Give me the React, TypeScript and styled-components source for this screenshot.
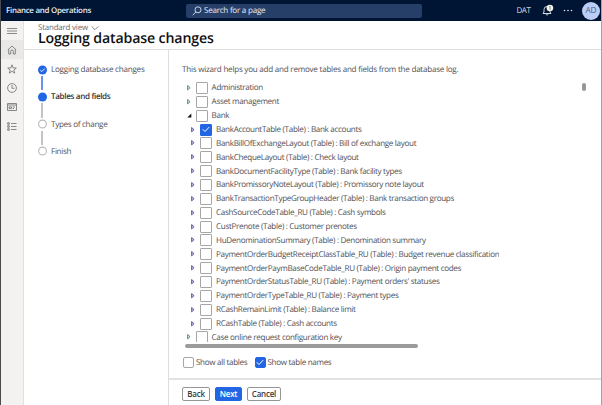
import React from "react";
import styled, { createGlobalStyle, css } from "styled-components";

const Global = createGlobalStyle`
  * { box-sizing: border-box; }
  body { margin: 0; background: #fff; overflow: hidden; }
  svg { display: block; flex: none; }
`;

const Shell = styled.div`
  width: 602px;
  height: 405px;
  display: flex;
  flex-direction: column;
  overflow: hidden;
  background: #fff;
  border-left: 1px solid #4b4a4d;
  border-right: 1px solid #a3a3a3;
  font-family: "Open Sans", "Noto Sans", sans-serif;
  font-size: 8.1px;
  color: #505055;
  white-space: nowrap;
  text-rendering: geometricPrecision;
`;

const TopBar = styled.header`
  height: 21px;
  flex: none;
  display: flex;
  align-items: center;
  background: #001433;
  color: #e8edf5;
  padding: 0 1px 0 5px;
`;

const Brand = styled.div`
  width: 180px;
  font-size: 7.9px;
  font-weight: 600;
  letter-spacing: -0.26px;
`;

const Search = styled.div`
  width: 236px;
  height: 14px;
  border-radius: 2px;
  background: #263f68;
  display: flex;
  align-items: center;
  gap: 2px;
  padding-left: 6px;
  font-size: 8.1px;
  letter-spacing: -0.26px;
`;

const TopActions = styled.div`
  margin-left: auto;
  display: flex;
  align-items: center;
`;

const Company = styled.span`
  font-size: 8px;
  letter-spacing: -0.45px;
  width: 25px;
  color: #d5dbe6;
`;

const Overflow = styled.span`
  margin: 0 9.5px 0 9px;
`;

const Avatar = styled.div`
  width: 18px;
  height: 18px;
  border-radius: 50%;
  background: #b9cdf6;
  color: #51637f;
  font-size: 8.4px;
  letter-spacing: -0.2px;
  display: flex;
  align-items: center;
  justify-content: center;
`;

const Body = styled.div`
  flex: 1;
  display: flex;
  min-height: 0;
`;

const Rail = styled.nav`
  width: 23px;
  flex: none;
  background: #f3f2f1;
  border-right: 1px solid #e1e1e1;
`;

const RailItem = styled.div<{ $active?: boolean }>`
  height: 19.2px;
  display: flex;
  align-items: center;
  justify-content: center;
  background: ${(p) => (p.$active ? "#e9e8e6" : "transparent")};
`;

const Main = styled.div`
  flex: 1;
  min-width: 0;
  display: flex;
  flex-direction: column;
`;

const PageHead = styled.div`
  height: 29px;
  flex: none;
  border-bottom: 1px solid #dedede;
  padding: 2px 0 0 14px;
`;

const View = styled.div`
  height: 10px;
  display: flex;
  align-items: center;
  gap: 3px;
  font-size: 7.9px;
  line-height: 10px;
  color: #6a6a6e;
  letter-spacing: -0.18px;
`;

const Title = styled.h1`
  margin: -2px 0 0;
  font-size: 14.2px;
  line-height: 16px;
  font-weight: 600;
  color: #111;
  letter-spacing: -0.16px;
`;

const Wizard = styled.div`
  flex: 1;
  display: flex;
  min-height: 0;
`;

const Steps = styled.div`
  width: 144px;
  flex: none;
  padding: 13px 0 0 13.5px;
`;

const Step = styled.div<{ $current?: boolean; $ls: number }>`
  height: 13px;
  line-height: 13px;
  display: flex;
  align-items: center;
  gap: 4.5px;
  letter-spacing: ${(p) => p.$ls}px;
  ${(p) =>
    p.$current &&
    css`
      font-weight: 600;
      color: #333338;
    `}
`;

const Connector = styled.div<{ $done?: boolean }>`
  width: 2px;
  height: 14.3px;
  margin-left: 3.5px;
  background: ${(p) => (p.$done ? "#6a93ec" : "#c4c4c4")};
`;

const Work = styled.div`
  flex: 1;
  min-width: 0;
  border-left: 1px solid #dddddd;
  display: flex;
  flex-direction: column;
`;

const Panel = styled.section`
  height: 330px;
  flex: none;
  border-bottom: 2px solid #e2e2e2;
  padding-top: 13px;
`;

const Intro = styled.div`
  height: 14px;
  line-height: 14px;
  padding-left: 13px;
  letter-spacing: -0.25px;
`;

const TreeArea = styled.div`
  display: flex;
  justify-content: space-between;
  margin-top: 4px;
  padding: 0 15.5px 0 18px;
`;

const Tree = styled.div`
  height: 261px;
  overflow: hidden;
`;

const TreeRow = styled.div<{ $child?: boolean }>`
  height: 13.87px;
  display: flex;
  align-items: center;
  padding-left: ${(p) => (p.$child ? 4.4 : 0)}px;
  letter-spacing: -0.325px;
`;

const Box = styled.span<{ $on?: boolean; $size?: number }>`
  width: ${(p) => p.$size ?? 12}px;
  height: ${(p) => p.$size ?? 12}px;
  flex: none;
  display: flex;
  align-items: center;
  justify-content: center;
  border: 1px solid ${(p) => (p.$on ? "#2266e3" : "#a6a6a6")};
  border-radius: ${(p) => (p.$size ? 2 : 1)}px;
  background: ${(p) => (p.$on ? "#2266e3" : "#fff")};
  margin-right: ${(p) => (p.$size ? 2 : 3.6)}px;
`;

const Arrow = styled.span`
  width: 9px;
  flex: none;
`;

const VThumb = styled.div`
  width: 4px;
  height: 8px;
  border-radius: 2px;
  background: #979797;
  margin-top: 2px;
`;

const HThumb = styled.div`
  width: 233px;
  height: 4px;
  border-radius: 2px;
  background: #9b9b9b;
  margin: 2px 0 0 15.5px;
`;

const Options = styled.div`
  display: flex;
  padding-left: 14px;
  margin-top: 7.5px;
`;

const Option = styled.label<{ $w: number }>`
  display: flex;
  align-items: center;
  height: 14px;
  width: ${(p) => p.$w}px;
  letter-spacing: -0.32px;
`;

const Actions = styled.footer`
  display: flex;
  gap: 5px;
  padding: 6.5px 0 0 13px;
`;

const Button = styled.button<{ $w: number; $primary?: boolean }>`
  width: ${(p) => p.$w}px;
  height: 14px;
  padding: 0;
  border: 1px solid ${(p) => (p.$primary ? "#2266e3" : "#969696")};
  border-radius: 2px;
  background: ${(p) => (p.$primary ? "#2266e3" : "#fff")};
  color: ${(p) => (p.$primary ? "#fff" : "#3a3a3e")};
  font: 600 8px/11px "Open Sans", "Noto Sans", sans-serif;
  letter-spacing: -0.22px;
`;

const Check = () => (
  <svg width="8" height="7" viewBox="0 0 8 7" fill="none" stroke="#fff" strokeWidth="1">
    <path d="M.8 3.3 3 5.5 7.2 1.1" />
  </svg>
);

const Chevron = () => (
  <svg width="8" height="5" viewBox="0 0 8 5" fill="none" stroke="#666" strokeWidth=".8">
    <path d="m.7.4 3.3 3.3L7.3.4" />
  </svg>
);

const Expander = ({ open, child }: { open?: boolean; child?: boolean }) => (
  <Arrow>
    {open ? (
      <svg width="5" height="5" viewBox="0 0 5 5">
        <path d="M4.3.6v3.8H.3z" fill="#111" />
      </svg>
    ) : (
      <svg
        width="4"
        height="6"
        viewBox="0 0 4 6"
        fill={child ? "#c3c3e4" : "#dbe8e5"}
        stroke={child ? "#5353a2" : "#578078"}
        strokeWidth=".9"
      >
        <path d="M.6.5v4.4L3.1 2.7z" />
      </svg>
    )}
  </Arrow>
);

const Dot = ({ state }: { state: "done" | "current" | "todo" }) => (
  <svg width="9" height="10" viewBox="0 0 9 10" fill="none">
    <circle
      cx="4.5"
      cy="5"
      r={state === "todo" ? 3.9 : 4.5}
      fill={state === "todo" ? "#fff" : "#2266e3"}
      stroke={state === "todo" ? "#b9b9b9" : "none"}
      strokeWidth="1.1"
    />
    {state === "done" && <path d="m2.2 5 1.6 1.6 3-3" stroke="#fff" strokeWidth=".9" />}
  </svg>
);

const railIcons = [
  <svg width="10" height="8" viewBox="0 0 10 8"><path d="M0 1.5h10M0 4h10M0 6.5h10" /></svg>,
  <svg width="10" height="10" viewBox="0 0 10 10"><path d="M.8 5 5 1l4.2 4M1.7 4.4V9h2V6.3a1.3 1.3 0 0 1 2.6 0V9h2V4.4" /></svg>,
  <svg width="10" height="10" viewBox="0 0 10 10"><path d="M5 .8 6.1 3.9l3.2.1-2.5 2 .9 3.1L5 7.3 2.3 9.1l.9-3.1L.7 4l3.2-.1z" /></svg>,
  <svg width="10" height="10" viewBox="0 0 10 10"><circle cx="5" cy="5" r="4.4" /><path d="M5 2v3.3h2.4" /></svg>,
  <svg width="10" height="8" viewBox="0 0 10 8"><path d="M.5.5h9v7h-9zM.5 2h9M2 3.9h2.5v1.7H2zM5.7 4H8M5.7 5.5H7" /></svg>,
  <svg width="10" height="9" viewBox="0 0 10 9"><path d="M.7.7h1.6v1.6H.7zM.7 3.7h1.6v1.6H.7zM.7 6.7h1.6v1.6H.7zM4 1.5h5.5M4 4.5h5.5M4 7.5h5.5" /></svg>,
];

const RailIcon = styled.span`
  svg {
    fill: none;
    stroke: #6a6f6b;
    stroke-width: 0.8;
  }
`;

interface TreeNode {
  label: string;
  child?: boolean;
  open?: boolean;
  on?: boolean;
}

const nodes: TreeNode[] = [
  { label: "Administration" },
  { label: "Asset management" },
  { label: "Bank", open: true },
  { label: "BankAccountTable (Table) : Bank accounts", child: true, on: true },
  { label: "BankBillOfExchangeLayout (Table) : Bill of exchange layout", child: true },
  { label: "BankChequeLayout (Table) : Check layout", child: true },
  { label: "BankDocumentFacilityType (Table) : Bank facility types", child: true },
  { label: "BankPromissoryNoteLayout (Table) : Promissory note layout", child: true },
  { label: "BankTransactionTypeGroupHeader (Table) : Bank transaction groups", child: true },
  { label: "CashSourceCodeTable_RU (Table) : Cash symbols", child: true },
  { label: "CustPrenote (Table) : Customer prenotes", child: true },
  { label: "HuDenominationSummary (Table) : Denomination summary", child: true },
  { label: "PaymentOrderBudgetReceiptClassTable_RU (Table) : Budget revenue classification", child: true },
  { label: "PaymentOrderPaymBaseCodeTable_RU (Table) : Origin payment codes", child: true },
  { label: "PaymentOrderStatusTable_RU (Table) : Payment orders' statuses", child: true },
  { label: "PaymentOrderTypeTable_RU (Table) : Payment types", child: true },
  { label: "RCashRemainLimit (Table) : Balance limit", child: true },
  { label: "RCashTable (Table) : Cash accounts", child: true },
  { label: "Case online request configuration key" },
];

export default function App() {
  return (
    <Shell>
      <Global />
      <TopBar>
        <Brand>Finance and Operations</Brand>
        <Search>
          <svg width="10" height="10" viewBox="0 0 10 10" fill="none" stroke="#dce4f1" strokeWidth=".9">
            <circle cx="6" cy="3.8" r="3" />
            <path d="M3.8 6 .8 9.2" />
          </svg>
          Search for a page
        </Search>
        <TopActions>
          <Company>DAT</Company>
          <svg width="12" height="13" viewBox="0 0 12 13" fill="none" stroke="#e7ecf4" strokeWidth=".9">
            <path d="M1 9.5h8L8 8V5.5a3 3 0 0 0-6 0V8zM4 10.3c.3 1 1.8 1 2.1 0" />
            <circle cx="7.9" cy="4" r="3.3" fill="#f5f5ee" stroke="none" />
            <path d="m7.2 3 .9-.7v3.6" stroke="#59616c" strokeWidth=".7" />
          </svg>
          <Overflow>
            <svg width="10" height="3" viewBox="0 0 10 3" fill="#dce2eb">
              <circle cx="1.5" cy="1.5" r=".8" />
              <circle cx="5" cy="1.5" r=".8" />
              <circle cx="8.5" cy="1.5" r=".8" />
            </svg>
          </Overflow>
          <Avatar>AD</Avatar>
        </TopActions>
      </TopBar>
      <Body>
        <Rail>
          {railIcons.map((icon, i) => (
            <RailItem key={i} $active={i === 1}>
              <RailIcon>{icon}</RailIcon>
            </RailItem>
          ))}
        </Rail>
        <Main>
          <PageHead>
            <View>
              Standard view <Chevron />
            </View>
            <Title>Logging database changes</Title>
          </PageHead>
          <Wizard>
            <Steps>
              <Step $ls={-0.24}><Dot state="done" />Logging database changes</Step>
              <Connector $done />
              <Step $ls={-0.35} $current><Dot state="current" />Tables and fields</Step>
              <Connector />
              <Step $ls={-0.3}><Dot state="todo" />Types of change</Step>
              <Connector />
              <Step $ls={-0.3}><Dot state="todo" />Finish</Step>
            </Steps>
            <Work>
              <Panel>
                <Intro>This wizard helps you add and remove tables and fields from the database log.</Intro>
                <TreeArea>
                  <Tree>
                    {nodes.map((n) => (
                      <TreeRow key={n.label} $child={n.child}>
                        <Expander open={n.open} child={n.child} />
                        <Box $on={n.on}>{n.on && <Check />}</Box>
                        {n.label}
                      </TreeRow>
                    ))}
                  </Tree>
                  <VThumb />
                </TreeArea>
                <HThumb />
                <Options>
                  <Option $w={71.5}><Box $size={11} />Show all tables</Option>
                  <Option $w={90}><Box $size={11} $on><Check /></Box>Show table names</Option>
                </Options>
              </Panel>
              <Actions>
                <Button $w={28}>Back</Button>
                <Button $w={27} $primary>Next</Button>
                <Button $w={34}>Cancel</Button>
              </Actions>
            </Work>
          </Wizard>
        </Main>
      </Body>
    </Shell>
  );
}
